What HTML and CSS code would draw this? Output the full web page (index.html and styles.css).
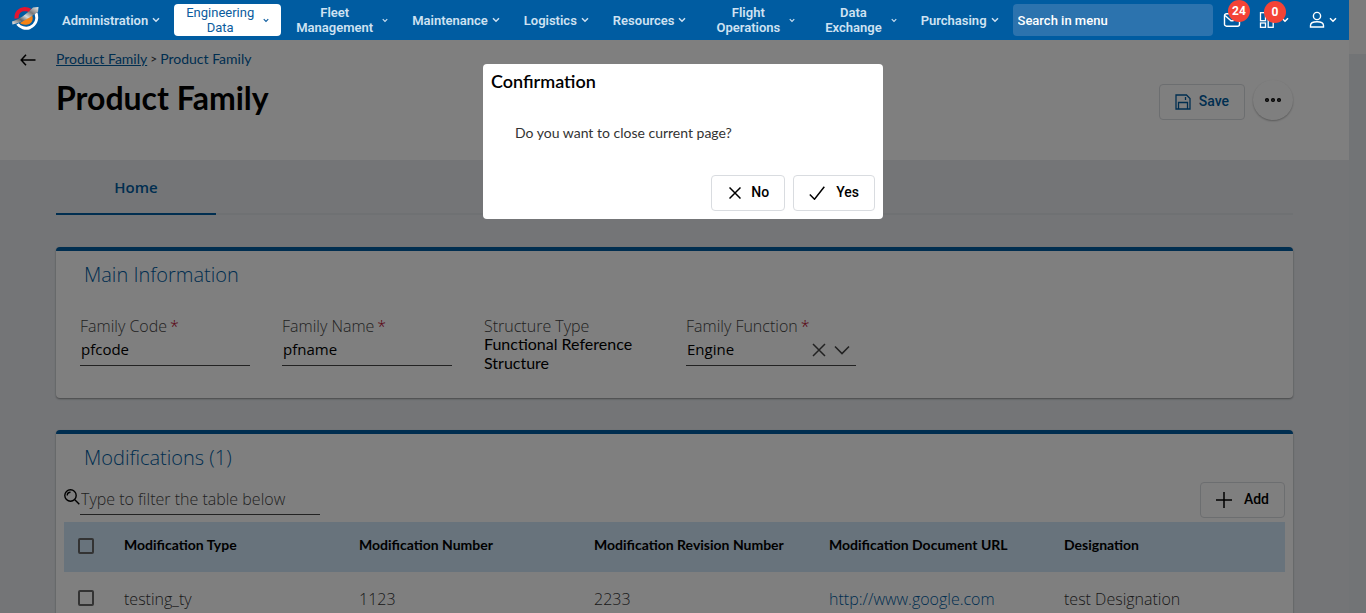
FILE: index.html
```html
<!DOCTYPE html>
<html lang="en">
<head>
<meta charset="utf-8">
<meta name="viewport" content="width=device-width, initial-scale=1">
<title>Product Family</title>
<link rel="stylesheet" href="styles.css">
</head>
<body>
<svg class="defs" aria-hidden="true">
  <symbol id="chevron" viewBox="0 0 8 6"><path d="M1 1.2l3 3 3-3" fill="none" stroke="currentColor" stroke-width="1.5"/></symbol>
</svg>
<div class="app">
  <header class="topbar">
    <a class="logo" href="#" aria-label="Home page">
      <svg width="28" height="26" viewBox="0 0 28 26">
        <defs><linearGradient id="steel" x1="0" y1="1" x2="1" y2="0"><stop offset="0" stop-color="#eee"/><stop offset=".3" stop-color="#666"/><stop offset=".5" stop-color="#d8d8d8"/><stop offset=".7" stop-color="#777"/><stop offset="1" stop-color="#eee"/></linearGradient></defs>
        <path d="M4.500 12.500C4 6.500 8 3.300 12.500 3c2.500 0 4 .5 5.500 1.500" fill="none" stroke="#e4152f" stroke-width="4"/>
        <path d="M8 17l12-8c2 5-.5 9-4.500 9.500-3 .4-6 .2-7.500-1.500z" fill="#f58213"/>
        <path d="M24 7c2 6.500-.5 12-6 14.500-4.500 1.800-10 0-12.500-3.500" fill="none" stroke="#fff" stroke-width="3"/>
        <path d="M0 15.500C8 13 14 8.500 21 1.500l5.500-.5-.5 5C20 10 11 16.500.5 18.500z" fill="url(#steel)"/>
      </svg>
    </a>
    <nav class="menu">
      <button class="menu-item" type="button"><span>Administration</span><svg class="chev"><use href="#chevron"/></svg></button>
      <button class="menu-item menu-item--two menu-item--active" type="button"><span>Engineering<br>Data</span><svg class="chev chev--small"><use href="#chevron"/></svg></button>
      <button class="menu-item menu-item--two" type="button"><span>Fleet<br>Management</span><svg class="chev chev--small"><use href="#chevron"/></svg></button>
      <button class="menu-item" type="button"><span>Maintenance</span><svg class="chev"><use href="#chevron"/></svg></button>
      <button class="menu-item" type="button"><span>Logistics</span><svg class="chev"><use href="#chevron"/></svg></button>
      <button class="menu-item" type="button"><span>Resources</span><svg class="chev"><use href="#chevron"/></svg></button>
      <button class="menu-item menu-item--two menu-item--wide" type="button"><span>Flight<br>Operations</span><svg class="chev chev--small"><use href="#chevron"/></svg></button>
      <button class="menu-item menu-item--two" type="button"><span>Data<br>Exchange</span><svg class="chev chev--small"><use href="#chevron"/></svg></button>
      <button class="menu-item" type="button"><span>Purchasing</span><svg class="chev"><use href="#chevron"/></svg></button>
    </nav>
    <input class="menu-search" type="search" placeholder="Search in menu" aria-label="Search in menu">
    <div class="tools">
      <button class="tool" type="button" aria-label="Messages">
        <svg width="18" height="16" viewBox="0 0 18 16" fill="none" stroke="currentColor" stroke-width="1.4"><rect x="1.500" y="1.700" width="15" height="12.500" rx="2"/><path d="M2 3.500l6 5.200h2L16 3.500"/></svg>
        <span class="badge">24</span>
      </button>
      <button class="tool" type="button" aria-label="Applications">
        <svg width="16" height="16" viewBox="0 0 16 16" fill="none" stroke="currentColor" stroke-width="1.300"><rect x="1.500" y=".7" width="5" height="8"/><rect x="1.500" y="11" width="5" height="4.300"/><rect x="9.200" y=".7" width="5" height="4.300"/><rect x="9.200" y="7.300" width="5" height="8"/></svg>
        <svg class="chev"><use href="#chevron"/></svg>
        <span class="badge badge--low">0</span>
      </button>
      <button class="tool tool--user" type="button" aria-label="User">
        <svg width="16" height="18" viewBox="0 0 16 18" fill="none" stroke="currentColor" stroke-width="1.400"><circle cx="8" cy="5" r="3.600"/><path d="M1.500 16v-1.500c0-2.500 2.200-3.700 6.500-3.700s6.500 1.200 6.500 3.700V16z"/></svg>
        <svg class="chev"><use href="#chevron"/></svg>
      </button>
    </div>
  </header>

  <section class="page-head">
    <button class="back" type="button" aria-label="Back"><svg width="16" height="12" viewBox="0 0 16 12" fill="none" stroke="currentColor" stroke-width="1.500"><path d="M6 .8L1.200 6 6 11.200M1.200 6H15.500"/></svg></button>
    <div class="page-title">
      <nav class="crumbs"><a href="#">Product Family</a><i>&gt;</i><span>Product Family</span></nav>
      <h1>Product Family</h1>
    </div>
    <div class="page-actions">
      <button class="btn btn--save" type="button"><svg width="16" height="16" viewBox="0 0 16 16" fill="none" stroke="currentColor" stroke-width="1.300"><path d="M1 1h10.500L15 4.500V15H1z"/><path d="M3.500 15V8.500h9V15M10.500 3v3"/></svg>Save</button>
      <button class="more" type="button" aria-label="More actions"><svg width="18" height="6" viewBox="0 0 18 6" fill="none" stroke="currentColor" stroke-width="1.500"><circle cx="3" cy="3" r="1.300"/><circle cx="9" cy="3" r="1.300"/><circle cx="15" cy="3" r="1.300"/></svg></button>
    </div>
  </section>

  <main class="content">
    <div class="tabs" role="tablist"><button class="tab" type="button" role="tab" aria-selected="true">Home</button></div>

    <section class="card card--info">
      <h2>Main Information</h2>
      <div class="fields">
        <div class="field"><label for="code">Family Code<b>*</b></label><input id="code" class="control" type="text" value="pfcode"></div>
        <div class="field"><label for="name">Family Name<b>*</b></label><input id="name" class="control" type="text" value="pfname"></div>
        <div class="field"><span class="label">Structure Type</span><span class="static">Functional Reference Structure</span></div>
        <div class="field"><label for="func">Family Function<b>*</b></label>
          <div class="control pick">
            <select id="func"><option>Engine</option></select>
            <button type="button" aria-label="Clear"><svg width="14" height="14" viewBox="0 0 14 14" stroke="currentColor" stroke-width="1.500"><path d="M1 1l12 12M13 1L1 13"/></svg></button>
            <svg width="16" height="10" viewBox="0 0 16 10" fill="none" stroke="currentColor" stroke-width="1.600"><path d="M1 1.500l7 7 7-7"/></svg>
          </div>
        </div>
      </div>
    </section>

    <section class="card card--mods">
      <h2>Modifications (1)</h2>
      <div class="toolbar">
        <div class="filter">
          <svg width="16" height="16" viewBox="0 0 16 16" fill="none" stroke="currentColor" stroke-width="1.400"><circle cx="6.500" cy="6.500" r="5.700"/><path d="M10.800 10.800l4.500 4.500M3.200 6.500c0-2 1.300-3.300 3.300-3.300" /></svg>
          <input type="text" placeholder="Type to filter the table below" aria-label="Type to filter the table below">
        </div>
        <button class="btn btn--add" type="button"><svg width="16" height="16" viewBox="0 0 16 16" stroke="currentColor" stroke-width="1.500"><path d="M8 0v16M0 8h16"/></svg>Add</button>
      </div>
      <table class="grid">
        <thead><tr><th class="pickcol"><input type="checkbox" aria-label="Select all"></th><th>Modification Type</th><th>Modification Number</th><th>Modification Revision Number</th><th>Modification Document URL</th><th>Designation</th></tr></thead>
        <tbody><tr><td class="pickcol"><input type="checkbox" aria-label="Select row"></td><td>testing_ty</td><td>1123</td><td>2233</td><td><a href="#">http://www.google.com</a></td><td>test Designation</td></tr></tbody>
      </table>
    </section>
  </main>
</div>

<div class="overlay">
  <div class="dialog" role="dialog" aria-modal="true" aria-labelledby="dlg-title">
    <h2 id="dlg-title">Confirmation</h2>
    <p>Do you want to close current page?</p>
    <div class="dialog-actions">
      <button class="btn btn--no" type="button"><svg width="12" height="12" viewBox="0 0 12 12" stroke="currentColor" stroke-width="1.500"><path d="M.5.5l11 11M11.500.5l-11 11"/></svg>No</button>
      <button class="btn btn--yes" type="button"><svg width="16" height="14" viewBox="0 0 16 14" fill="none" stroke="currentColor" stroke-width="1.500"><path d="M.8 8.500l4.700 4.700L15.300.7"/></svg>Yes</button>
    </div>
  </div>
</div>
</body>
</html>
```
FILE: styles.css
```css
* { box-sizing: border-box; }
body {
  margin: 0;
  height: 100vh;
  overflow: hidden;
  padding-right: 17px;
  font-family: "Open Sans", sans-serif;
  background: linear-gradient(#f6f6f6 54px, #e5e8ec 54px);
}
button, input, select { font: inherit; color: inherit; border-radius: 0; }
button { border: 0; background: none; padding: 0; cursor: pointer; }
h1, h2, p { margin: 0; }
svg { flex: none; }
.defs { position: absolute; width: 0; height: 0; }
.app { height: 100%; overflow: hidden; background: #e8ebef; }

.topbar {
  position: relative;
  z-index: 3;
  display: flex;
  align-items: center;
  height: 40px;
  background: #005ca1;
  color: #fff;
  font-family: Roboto, sans-serif;
  font-size: 13px;
}
.logo { display: flex; margin: 0 10px 2px 12px; }
.menu { display: flex; align-items: center; color: #cfe2f2; font-weight: 600; }
.menu-item {
  display: flex;
  align-items: center;
  gap: 4px;
  height: 32px;
  padding: 0 12px;
  line-height: 15px;
}
.menu-item--two { gap: 9px; }
.menu-item--wide { padding: 0 18px; }
.menu-item--active { margin: 0 3px 0 2px; background: #fff; color: #0b5c9e; border-radius: 4px; font-weight: 400; }
.chev { width: 8px; height: 6px; }
.chev--small { width: 6px; height: 5px; }
.menu-search {
  flex: 1;
  min-width: 0;
  height: 32px;
  margin: 0 10px 0 2px;
  padding: 0 5px;
  border: 0;
  border-radius: 4px;
  background: #2c73ae;
  font-weight: 500;
}
.menu-search::placeholder { color: #fff; opacity: 1; }
.tools { display: flex; align-items: center; padding-right: 12px; }
.tool { position: relative; display: flex; align-items: center; gap: 6px; width: 36px; }
.tool + .tool { width: 50px; }
.tool.tool--user { width: 28px; gap: 4px; }
.badge {
  position: absolute;
  top: -12px;
  left: 5px;
  width: 22px;
  height: 22px;
  border-radius: 50%;
  background: #f44336;
  font-size: 12px;
  font-weight: 700;
  line-height: 22px;
  text-align: center;
}
.badge--low { top: -11px; }

.page-head { display: flex; height: 120px; padding: 10px 56px 0 20px; background: #fff; }
.back { width: 36px; height: 20px; text-align: left; display: flex; align-items: center; }
.page-title { flex: 1; font-family: Lato, sans-serif; }
.crumbs { display: flex; font-size: 14px; line-height: 18px; color: #005ca1; }
.crumbs a { color: inherit; }
.crumbs i { margin: 0 3px; font-size: 12px; font-style: normal; color: #333; }
h1 { font-size: 32px; line-height: 40px; margin-top: 10px; font-weight: 700; }
.page-actions { display: flex; align-items: flex-start; gap: 8px; padding-top: 30px; }
.btn {
  display: flex;
  align-items: center;
  height: 36px;
  margin-top: 4px;
  padding: 0 15px 2px;
  border: 1px solid #d9dce0;
  border-radius: 4px;
  font: 500 14px/20px Roboto, sans-serif;
  gap: 8px;
}
.btn svg { margin-top: 2px; }
.btn--save { color: #005ca1; }
.more { width: 40px; height: 40px; border-radius: 50%; box-shadow: 0 1px 2px rgba(0,0,0,.3); display: flex; align-items: center; justify-content: center; }

.content { padding: 0 56px; }
.tabs { height: 55px; display: flex; box-shadow: inset 0 -2px #dfe2e6; margin-bottom: 32px; }
.tab { width: 160px; border-bottom: 2px solid #005ca1; color: #005ca1; font: 600 15px/20px "Open Sans", sans-serif; }
.card { background: #fff; border-top: 4px solid #005ca1; border-radius: 4px; box-shadow: 0 1px 2px rgba(0,0,0,.4); padding: 8px 8px 0; margin-bottom: 32px; }
.card h2 { font-size: 20px; line-height: 32px; font-weight: 300; color: #005ca1; padding-left: 20px; }
.card--info { height: 151px; }
.fields { display: grid; grid-template-columns: repeat(4, 170px); gap: 32px; padding: 28px 16px 0; font-size: 15px; }
.field { display: flex; flex-direction: column; min-width: 0; }
.field label, .label { font-size: 16px; font-weight: 300; line-height: 15px; color: #444; white-space: nowrap; }
.field b { color: #b3001b; font-weight: 300; margin-left: 3px; }
.static { font: 400 16px/19px Lato, sans-serif; }
.control { width: 100%; height: 32px; border: 0; border-bottom: 1px solid #444; padding: 0 1px 2px; background: none; }
.pick { display: flex; align-items: center; gap: 8px; padding-right: 6px; color: #444; }
.pick select { flex: 1; min-width: 0; appearance: none; border: 0; background: none; color: #000; padding: 0; }
.pick button { display: flex; }
.pick svg { margin-top: 2px; }

.toolbar { display: flex; justify-content: space-between; align-items: flex-start; height: 48px; padding-top: 4px; }
.filter { display: flex; }
.filter svg { margin-top: 11px; }
.filter input { width: 240px; height: 37px; border: 0; border-bottom: 1px solid #444; padding: 6px 1px 0; background: none; font-size: 16px; font-weight: 300; }
.filter input::placeholder { color: #444; opacity: 1; }
.btn--add { gap: 12px; }
.grid { width: 100%; table-layout: fixed; border-collapse: collapse; text-align: left; }
.grid th, .grid td { padding: 0 0 4px 14px; }
.grid th { height: 50px; background: #d0e6f8; font: 700 14px/20px Lato, sans-serif; }
.grid td { height: 58px; font-size: 16px; font-weight: 300; color: #333; }
.grid .pickcol { width: 46px; }
.grid th.pickcol { padding-bottom: 2px; }
.grid td.pickcol { padding-bottom: 6px; }
.grid a { color: #005ca1; text-decoration: none; }
.grid input { appearance: none; display: block; width: 16px; height: 16px; margin: 0; border: 2px solid #666; border-radius: 2px; }

.overlay { position: fixed; inset: 0; z-index: 2; display: flex; justify-content: center; align-items: flex-start; padding-top: 64px; background: rgba(0,0,0,.5); }
.dialog { width: 400px; max-width: 90%; padding: 8px; border-radius: 4px; background: #fff; font-family: Lato, sans-serif; }
.dialog h2 { font-size: 18px; line-height: 18px; font-weight: 600; }
.dialog p { padding: 33px 24px 28px; font-size: 14px; line-height: 20px; color: #333; }
.dialog-actions { display: flex; justify-content: flex-end; gap: 8px; }
.btn--no { padding: 0 15px 2px 17px; gap: 10px; }
.btn--yes { gap: 11px; }
```
